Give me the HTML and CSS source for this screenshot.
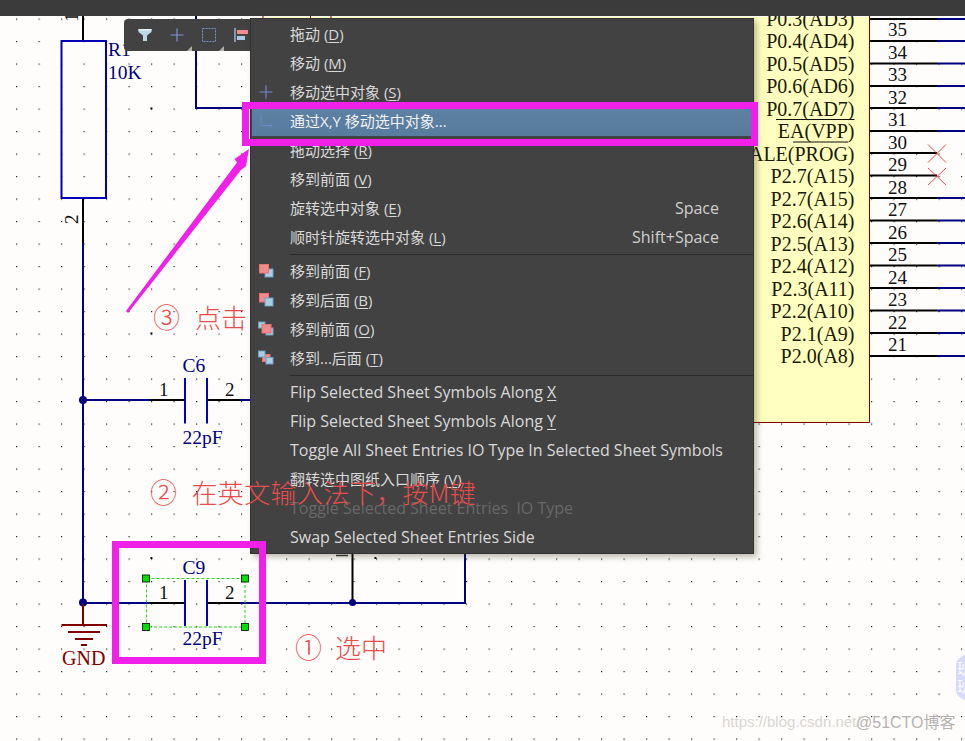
FILE: index.html
```html
<!DOCTYPE html>
<html lang="zh">
<head>
<meta charset="utf-8">
<title>Schematic context menu</title>
<link rel="stylesheet" href="styles.css">
</head>
<body>
<div class="titlebar"></div>
<main class="canvas">
  <svg class="sheet" width="965" height="725" viewBox="0 16 965 725" xmlns="http://www.w3.org/2000/svg">
    <defs>
      <pattern id="grid" x="16" y="18.5" width="22.5" height="22.5" patternUnits="userSpaceOnUse">
        <rect x="0" y="0" width="1.2" height="1.2" fill="#222"/>
      </pattern>
    </defs>
    <rect x="0" y="16" width="965" height="725" fill="#fffdfb"/>
    <rect x="0" y="16" width="965" height="725" fill="url(#grid)"/>
    <rect x="150.4" y="107.4" width="2" height="2" fill="#111"/>
    <rect x="150.4" y="332.4" width="2" height="2" fill="#111"/>
    <rect x="150.4" y="557" width="2" height="2" fill="#111"/>
    <rect x="374.4" y="557" width="2" height="2" fill="#111"/>

    <!-- IC body -->
    <rect x="263" y="17" width="606.5" height="405.5" fill="#ffffc0"/>
    <path d="M869.500 16V422.500H263M263 16V18M310.500 16V18M331 16V18" stroke="#800000" stroke-width="1" fill="none"/>
    <g class="ic-label">
      <text x="854.5" y="25.5">P0.3(AD3)</text>
      <text x="854.5" y="48">P0.4(AD4)</text>
      <text x="854.5" y="70.5">P0.5(AD5)</text>
      <text x="854.5" y="93">P0.6(AD6)</text>
      <text x="854.5" y="115.5">P0.7(AD7)</text>
      <text x="854.5" y="138">EA(VPP)</text>
      <text x="854.5" y="160.5">ALE(PROG)</text>
      <text x="854.5" y="183">P2.7(A15)</text>
      <text x="854.5" y="205.5">P2.7(A15)</text>
      <text x="854.5" y="228">P2.6(A14)</text>
      <text x="854.5" y="250.5">P2.5(A13)</text>
      <text x="854.5" y="273">P2.4(A12)</text>
      <text x="854.5" y="295.5">P2.3(A11)</text>
      <text x="854.5" y="318">P2.2(A10)</text>
      <text x="854.5" y="340.5">P2.1(A9)</text>
      <text x="854.5" y="363">P2.0(A8)</text>
    </g>
    <path d="M776 119.5H854.5M793 142H848" stroke="#111" stroke-width="1.2" fill="none"/>

    <!-- IC pins -->
    <path class="wire-black" d="M870 19H937M870 41H937M870 63.5H937M870 86H937M870 108H937M870 131H937M870 153H937M870 175.5H937M870 198H937M870 220.5H937M870 243H937M870 265.5H937M870 288H937M870 310.5H937M870 333H937M870 356H937"/>
    <path class="wire-navy" d="M937 19H965M937 41H965M937 63.5H965M937 86H965M937 108H965M937 131H965M937 198H965M937 220.5H965M937 243H965M937 265.5H965M937 288H965M937 310.5H965M937 333H965M937 356H965"/>
    <g class="pin-num">
      <text x="888" y="36">35</text><text x="888" y="58.5">34</text><text x="888" y="81">33</text>
      <text x="888" y="103.5">32</text><text x="888" y="126">31</text><text x="888" y="148.5">30</text>
      <text x="888" y="171">29</text><text x="888" y="193.5">28</text><text x="888" y="216">27</text>
      <text x="888" y="238.5">26</text><text x="888" y="261">25</text><text x="888" y="283.5">24</text>
      <text x="888" y="306">23</text><text x="888" y="328.5">22</text><text x="888" y="351">21</text>
    </g>
    <path d="M928 144.5L946 162.5M946 144.5L928 162.5M928 185L946 168M928 168L946 185" stroke="#e02020" stroke-width="0.8" fill="none"/>

    <!-- R1 -->
    <path class="wire-black" d="M83 16V41M83 198V243"/>
    <rect x="61.5" y="41" width="44.5" height="157" fill="none" stroke="#0000b4" stroke-width="2"/>
    <text class="pin-num" transform="translate(78,22) rotate(-90)">1</text>
    <text class="pin-num" transform="translate(78,224) rotate(-90)">2</text>
    <text class="part-label" x="108" y="56">R1</text>
    <text class="part-label" x="108" y="79">10K</text>

    <!-- wires -->
    <path class="wire-navy" d="M83 243V602M196 16V108H250"/>

    <!-- C6 -->
    <path class="wire-navy" d="M83 400H150M240 400H250"/>
    <path class="wire-black" d="M150 400H185M207 400H240"/>
    <path class="plate" d="M185 378V423.5M207 378V423.5"/>
    <circle cx="83" cy="400" r="4" fill="#000080"/>
    <text class="part-label" x="182.5" y="372">C6</text>
    <text class="pin-num" x="159" y="396">1</text>
    <text class="pin-num" x="225" y="396">2</text>
    <text class="part-label" x="182.5" y="444">22pF</text>

    <!-- C9 row -->
    <path class="wire-navy" d="M83 603H150M240 603H465V554"/>
    <path class="wire-black" d="M150 603H185M207 603H240M352.5 554V602"/>
    <path class="plate" d="M185 580V626M207 580V626"/>
    <circle cx="83" cy="602.500" r="4" fill="#000080"/>
    <circle cx="352.500" cy="602.500" r="3.500" fill="#000080"/>
    <text class="part-label" x="182.500" y="574">C9</text>
    <text class="pin-num" x="159" y="599">1</text>
    <text class="pin-num" x="225" y="599">2</text>
    <text class="part-label" x="182.500" y="645">22pF</text>
    <path d="M336 555.500H348" stroke="#333" stroke-width="1.500"/>
    <rect x="146.500" y="578.500" width="98.500" height="48.500" fill="none" stroke="#22dd22" stroke-width="1" stroke-dasharray="3 2"/>
    <g class="handle">
      <rect x="142.500" y="575" width="7" height="7"/><rect x="241.500" y="575" width="7" height="7"/>
      <rect x="142.500" y="623.500" width="7" height="7"/><rect x="241.500" y="623.500" width="7" height="7"/>
    </g>

    <!-- GND -->
    <path class="gnd" d="M83 604V625M61.500 625H107M68 632H100M75 639H93M81 645H87"/>
    <text class="gnd-label" x="62" y="665">GND</text>

    <!-- watermark -->
    <text class="wm-faint" x="722" y="727">https://blog.csdn.net/</text>
    <text class="wm-strong" x="856" y="728">@51CTO博客</text>
    <path d="M965 655C960 657 956 660 956 665V690C956 695 960 698 965 700Z" fill="#d7d9f7"/>
    <text class="wm-badge" x="957" y="674">班</text>
    <text class="wm-badge" x="957" y="692">班</text>
  </svg>

  <div class="toolbar">
    <svg class="tool" width="18" height="18" viewBox="0 0 18 18"><path d="M2.500 3H15.500V6L11 9.500V15H7V9.500L2.500 6Z" fill="#bcd8e4"/><path d="M2.500 3H15.500V4.500H2.500Z" fill="#e8f2f6"/></svg>
    <span class="tool-wrap"><svg class="tool" width="18" height="18" viewBox="0 0 18 18"><path d="M9 2.500V15.500M2.500 9H15.500" stroke="#7d93cf" stroke-width="1.200" fill="none"/></svg><i class="corner"></i></span>
    <span class="tool-wrap"><svg class="tool" width="18" height="18" viewBox="0 0 18 18"><rect x="2.500" y="2.500" width="13" height="13" fill="none" stroke="#7d93cf" stroke-width="1" stroke-dasharray="2 1"/></svg><i class="corner"></i></span>
    <svg class="tool" width="18" height="18" viewBox="0 0 18 18"><path d="M3 2V16" stroke="#9fb4d8" stroke-width="1.500"/><rect x="5" y="4" width="11" height="4" fill="#ee8e8e"/><rect x="5" y="10" width="8" height="4" fill="#a7cbe6"/></svg>
  </div>

  <ul class="menu">
    <li class="item"><span class="slot"></span><span class="label">拖动 (<u>D</u>)</span></li>
    <li class="item"><span class="slot"></span><span class="label">移动 (<u>M</u>)</span></li>
    <li class="item"><span class="slot"><svg width="16" height="16" viewBox="0 0 16 16"><path d="M8 1.500V14.500M1.500 8H14.500" stroke="#6f88c8" stroke-width="1.200" fill="none"/></svg></span><span class="label">移动选中对象 (<u>S</u>)</span></li>
    <li class="item active"><span class="slot"><svg width="16" height="16" viewBox="0 0 16 16"><path d="M3 1.500V12.500H14M12 10.500L14 12.500L12 14.500" stroke="#6f88c8" stroke-width="1" fill="none"/></svg></span><span class="label">通过X,Y 移动选中对象...</span></li>
    <li class="item"><span class="slot"></span><span class="label">拖动选择 (<u>R</u>)</span></li>
    <li class="item"><span class="slot"></span><span class="label">移到前面 (<u>V</u>)</span></li>
    <li class="item"><span class="slot"></span><span class="label">旋转选中对象 (<u>E</u>)</span><span class="key">Space</span></li>
    <li class="item"><span class="slot"></span><span class="label">顺时针旋转选中对象 (<u>L</u>)</span><span class="key">Shift+Space</span></li>
    <li class="sep"></li>
    <li class="item"><span class="slot"><svg width="16" height="16" viewBox="0 0 16 16"><rect x="7" y="6" width="8" height="8" class="sq-blue"/><rect x="1.500" y="1.500" width="9" height="8.500" class="sq-red"/></svg></span><span class="label">移到前面 (<u>F</u>)</span></li>
    <li class="item"><span class="slot"><svg width="16" height="16" viewBox="0 0 16 16"><rect x="1.500" y="1.500" width="9" height="8.500" class="sq-red"/><rect x="7" y="6" width="8" height="8" class="sq-blue"/></svg></span><span class="label">移到后面 (<u>B</u>)</span></li>
    <li class="item"><span class="slot"><svg width="16" height="16" viewBox="0 0 16 16"><rect x="8" y="7" width="7" height="7" class="sq-blue"/><rect x="0.500" y="1" width="6.500" height="6" class="sq-blue"/><rect x="4" y="3.500" width="9" height="8.500" class="sq-red"/></svg></span><span class="label">移到前面 (<u>O</u>)</span></li>
    <li class="item"><span class="slot"><svg width="16" height="16" viewBox="0 0 16 16"><rect x="4.500" y="4.500" width="7.500" height="7" class="sq-red"/><rect x="0.500" y="1" width="6.500" height="6" class="sq-blue"/><rect x="8" y="7.500" width="7" height="6.500" class="sq-blue"/></svg></span><span class="label">移到...后面 (<u>T</u>)</span></li>
    <li class="sep"></li>
    <li class="item en"><span class="slot"></span><span class="label">Flip Selected Sheet Symbols Along <u>X</u></span></li>
    <li class="item en"><span class="slot"></span><span class="label">Flip Selected Sheet Symbols Along <u>Y</u></span></li>
    <li class="item en"><span class="slot"></span><span class="label">Toggle All Sheet Entries IO Type In Selected Sheet Symbols</span></li>
    <li class="item"><span class="slot"></span><span class="label">翻转选中图纸入口顺序 (<u>V</u>)</span></li>
    <li class="item en disabled"><span class="slot"></span><span class="label">Toggle Selected Sheet Entries  IO Type</span></li>
    <li class="item en"><span class="slot"></span><span class="label">Swap Selected Sheet Entries Side</span></li>
  </ul>

  <div class="callout-box box-menu"></div>
  <div class="callout-box box-part"></div>

  <svg class="arrow" width="130" height="170" viewBox="0 0 130 170" xmlns="http://www.w3.org/2000/svg">
    <path d="M0 164L2 166L115 23L120 19L123 2L108.500 12L111 15.500Z" fill="#f020e8"/>
  </svg>

  <p class="note note-3"><span class="num">③</span><span>点击</span></p>
  <p class="note note-2"><span class="num">②</span><span>在英文输入法下，按M键</span></p>
  <p class="note note-1"><span class="num">①</span><span>选中</span></p>
</main>
</body>
</html>
```
FILE: styles.css
```css
* { box-sizing: border-box; }
html, body { margin: 0; padding: 0; }
body {
  width: 965px;
  height: 741px;
  overflow: hidden;
  background: #fffdfb;
  font-family: "Open Sans", "Noto Sans CJK SC", sans-serif;
}
.titlebar { height: 16px; background: #3b3b3b; }
.canvas { position: relative; width: 965px; height: 725px; }
.sheet { display: block; }

.ic-label text { font: 20px "Liberation Serif", serif; fill: #1a1a00; text-anchor: end; }
.pin-num, .pin-num text { font: 19px "Liberation Serif", serif; fill: #111; }
.part-label { font: 19.5px "Liberation Serif", serif; fill: #000080; }
.gnd-label { font: 20px "Liberation Serif", serif; fill: #800000; }
.wire-black { stroke: #000; stroke-width: 2; fill: none; }
.wire-navy { stroke: #000080; stroke-width: 2; fill: none; }
.plate { stroke: #0000c8; stroke-width: 2; fill: none; }
.gnd { stroke: #800000; stroke-width: 2; fill: none; }
.handle rect { fill: #00e000; stroke: #000; stroke-width: 0.8; }
.wm-faint { font: 15px "Liberation Sans", sans-serif; fill: #d8d6d4; }
.wm-strong { font: 16px "Liberation Sans", "Noto Sans CJK SC", sans-serif; fill: #b4b2b0; }
.wm-badge { font: 15px "Noto Sans CJK SC", sans-serif; fill: #fff; }

.toolbar {
  position: absolute;
  left: 124px;
  top: 3px;
  width: 130px;
  height: 32px;
  padding-left: 12px;
  display: flex;
  align-items: center;
  gap: 14px;
  background: #424242;
  border-radius: 4px 0 0 4px;
}
.tool { display: block; }
.tool-wrap { position: relative; display: block; width: 18px; height: 18px; }
.corner {
  position: absolute;
  right: -6px;
  bottom: -7px;
  width: 0;
  height: 0;
  border-left: 5px solid transparent;
  border-bottom: 5px solid #b0b0b0;
}

.menu {
  position: absolute;
  left: 250px;
  top: 2px;
  width: 504px;
  height: 536px;
  margin: 0;
  padding: 1px;
  list-style: none;
  background: #424242;
  border: 1px solid #333;
  box-shadow: 3px 3px 6px rgba(60, 60, 30, .35);
  color: #d9d9d9;
  font-size: 15px;
}
.item { display: flex; align-items: center; height: 29px; padding: 0 33px 2px 0; }
.en { font-size: 16px; }
.slot { width: 38px; flex: none; display: flex; padding-left: 6px; }
.slot svg { display: block; }
.label { flex: 1; white-space: pre; }
.key { color: #d0d0d0; font-size: 16px; }
.item u { text-underline-offset: 2px; }
.active { background: linear-gradient(#5d81a3, #587c9e); color: #f2f2f2; }
.disabled { color: #686868; }
.sep { height: 5px; margin-left: 38px; position: relative; }
.sep::after {
  content: "";
  position: absolute;
  left: 0;
  right: -1px;
  top: 2px;
  height: 1px;
  background: #2a2a2a;
}
.sq-red { fill: #f08c8c; stroke: #e87272; stroke-width: 1; }
.sq-blue { fill: #a8cfe6; stroke: #6f9fc4; stroke-width: 1; }

.callout-box { position: absolute; border: 7px solid #f020e8; }
.box-menu { left: 242px; top: 86px; width: 516px; height: 44px; }
.box-part { left: 112px; top: 525px; width: 154px; height: 123px; }

.arrow { position: absolute; left: 125.5px; top: 131px; }

.note {
  position: absolute;
  margin: 0;
  display: flex;
  color: #e84c4c;
  font: 26px/34px "Noto Sans CJK SC", sans-serif;
  font-weight: 300;
  white-space: nowrap;
}
.num { font-size: 27px; }
.note-3 { left: 153px; top: 284px; gap: 15px; }
.note-2 { left: 150px; top: 459px; gap: 14px; letter-spacing: .4px; }
.note-1 { left: 295px; top: 614px; gap: 13px; }
```
